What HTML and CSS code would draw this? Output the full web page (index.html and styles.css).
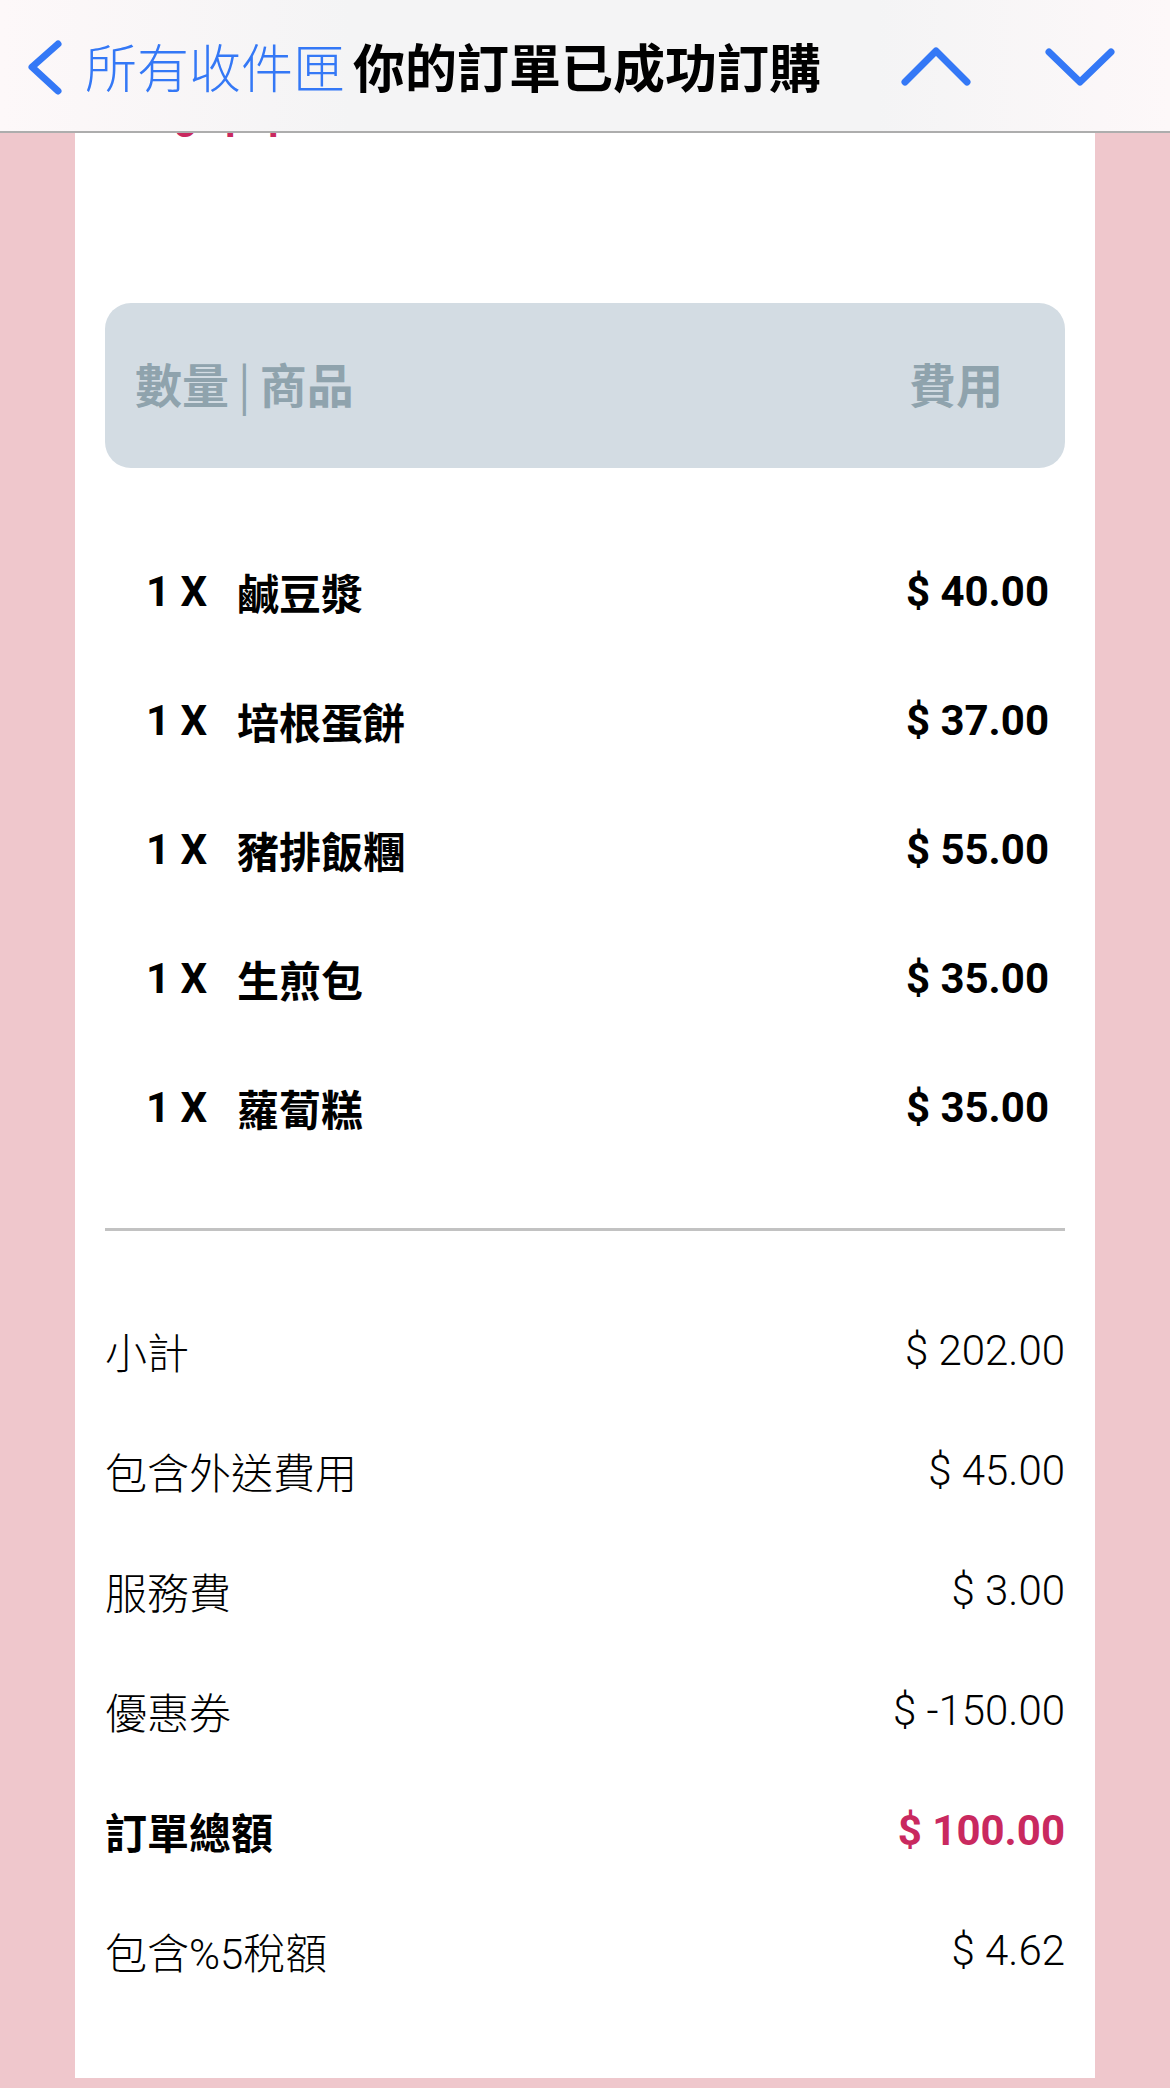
FILE: index.html
```html
<!DOCTYPE html>
<html lang="zh-Hant">

<head>
    <meta charset="UTF-8">
    <meta name="viewport" content="width=device-width, initial-scale=1.0">
    <title>你的訂單已成功訂購</title>

    <link rel="stylesheet" href="styles.css">

</head>

<body>
    <!-- 上方郵件導覽列，蓋在內容上面 -->
    <header class="topbar">
        <div class="topbar-title">
            <svg class="icon-back" width="40" height="60" viewBox="0 0 40 60">
                <polyline points="32,8 6,31 32,55" />
            </svg>
            <span class="inbox">所有收件匣</span>
            <span class="subject">你的訂單已成功訂購</span>
        </div>
        <div class="topbar-nav">
            <svg class="icon-nav" width="72" height="44" viewBox="0 0 72 44">
                <polyline points="5,38 36,7 67,38" />
            </svg>
            <svg class="icon-nav" width="72" height="44" viewBox="0 0 72 44">
                <polyline points="5,8 36,38 67,8" />
            </svg>
        </div>
    </header>

    <div class="page">
        <div class="card">
            <!-- 已捲動到上方，只露出文字底部 -->
            <div class="order-peek">
                <p class="order-no">#s0g-q8 p</p>
            </div>

            <div class="table-head">
                <span>數量<span class="bar">|</span>商品</span>
                <span>費用</span>
            </div>

            <ul class="items">
                <li class="item">
                    <span class="qty">1 X</span>
                    <span class="name">鹹豆漿</span>
                    <span class="price">$ 40.00</span>
                </li>
                <li class="item">
                    <span class="qty">1 X</span>
                    <span class="name">培根蛋餅</span>
                    <span class="price">$ 37.00</span>
                </li>
                <li class="item">
                    <span class="qty">1 X</span>
                    <span class="name">豬排飯糰</span>
                    <span class="price">$ 55.00</span>
                </li>
                <li class="item">
                    <span class="qty">1 X</span>
                    <span class="name">生煎包</span>
                    <span class="price">$ 35.00</span>
                </li>
                <li class="item">
                    <span class="qty">1 X</span>
                    <span class="name">蘿蔔糕</span>
                    <span class="price">$ 35.00</span>
                </li>
            </ul>

            <hr class="divider">

            <ul class="summary">
                <li class="sum-row"><span>小計</span><span>$ 202.00</span></li>
                <li class="sum-row"><span>包含外送費用</span><span>$ 45.00</span></li>
                <li class="sum-row"><span>服務費</span><span>$ 3.00</span></li>
                <li class="sum-row"><span>優惠券</span><span>$ -150.00</span></li>
                <li class="sum-row total"><span>訂單總額</span><span class="total-price">$ 100.00</span></li>
                <li class="sum-row"><span>包含%5稅額</span><span>$ 4.62</span></li>
            </ul>
        </div>
    </div>
</body>

</html>
```

FILE: styles.css
```css
* {
    margin: 0;
    padding: 0;
    list-style: none;
    box-sizing: border-box;
}

body {
    background: #efc7cc;
    font-family: Roboto, "Noto Sans CJK TC", sans-serif;
    color: #000;
}

/* 導覽列 */
.topbar {
    position: fixed;
    top: 0;
    left: 0;
    right: 0;
    height: 133px;
    padding: 0 54px 0 26px;
    display: flex;
    align-items: center;
    justify-content: space-between;
    background: linear-gradient(90deg, #fdf8f9 0%, #f4f4f5 30%, #f4f4f5 75%, #fdf8f9 100%);
    border-bottom: 2px solid #adadad;
    z-index: 10;
}

.topbar-title {
    display: flex;
    align-items: center;
    font-family: "Noto Sans CJK TC", sans-serif;
    font-size: 52px;
}

.icon-back {
    margin-right: 19px;
}

.icon-back polyline,
.icon-nav polyline {
    fill: none;
    stroke: #3478f6;
    stroke-width: 7;
    stroke-linecap: round;
    stroke-linejoin: round;
}

.inbox {
    color: #3478f6;
    font-weight: 300;
    margin-right: 8px;
}

.subject {
    font-weight: 700;
}

.topbar-nav {
    display: flex;
    gap: 72px;
}

/* 內容卡片 */
.page {
    padding: 0 75px 10px;
}

.card {
    background: #fff;
    padding: 0 30px 68px;
}

.order-peek {
    height: 8px;
    margin-top: 132px;
    margin-bottom: 163px;
    overflow: hidden;
}

.order-no {
    color: #c9295f;
    font-weight: 700;
    font-size: 40px;
    line-height: 48px;
    margin-top: -40px;
    padding-left: 2px;
}

.table-head {
    height: 165px;
    padding: 0 62px 6px 30px;
    display: flex;
    align-items: center;
    justify-content: space-between;
    background: #d3dce3;
    border-radius: 26px;
    color: #8fa3ad;
    font-family: "Noto Sans CJK TC", sans-serif;
    font-weight: 700;
    font-size: 47px;
}

.table-head .bar {
    font-weight: 400;
    margin: 0 9px;
}

.items {
    padding: 59px 16px 56px 41px;
}

.item {
    height: 129px;
    display: flex;
    align-items: center;
    font-weight: 700;
    font-size: 42px;
}

.qty {
    width: 91px;
    flex-shrink: 0;
}

.name {
    flex: 1;
    font-family: "Noto Sans CJK TC", sans-serif;
}

.divider {
    border: none;
    height: 3px;
    background: #c2c2c2;
}

.summary {
    padding-top: 59px;
}

.sum-row {
    height: 120px;
    display: flex;
    align-items: center;
    justify-content: space-between;
    font-size: 42px;
    font-weight: 300;
}

.sum-row.total {
    font-weight: 700;
}

.total-price {
    color: #c9295f;
}
```
